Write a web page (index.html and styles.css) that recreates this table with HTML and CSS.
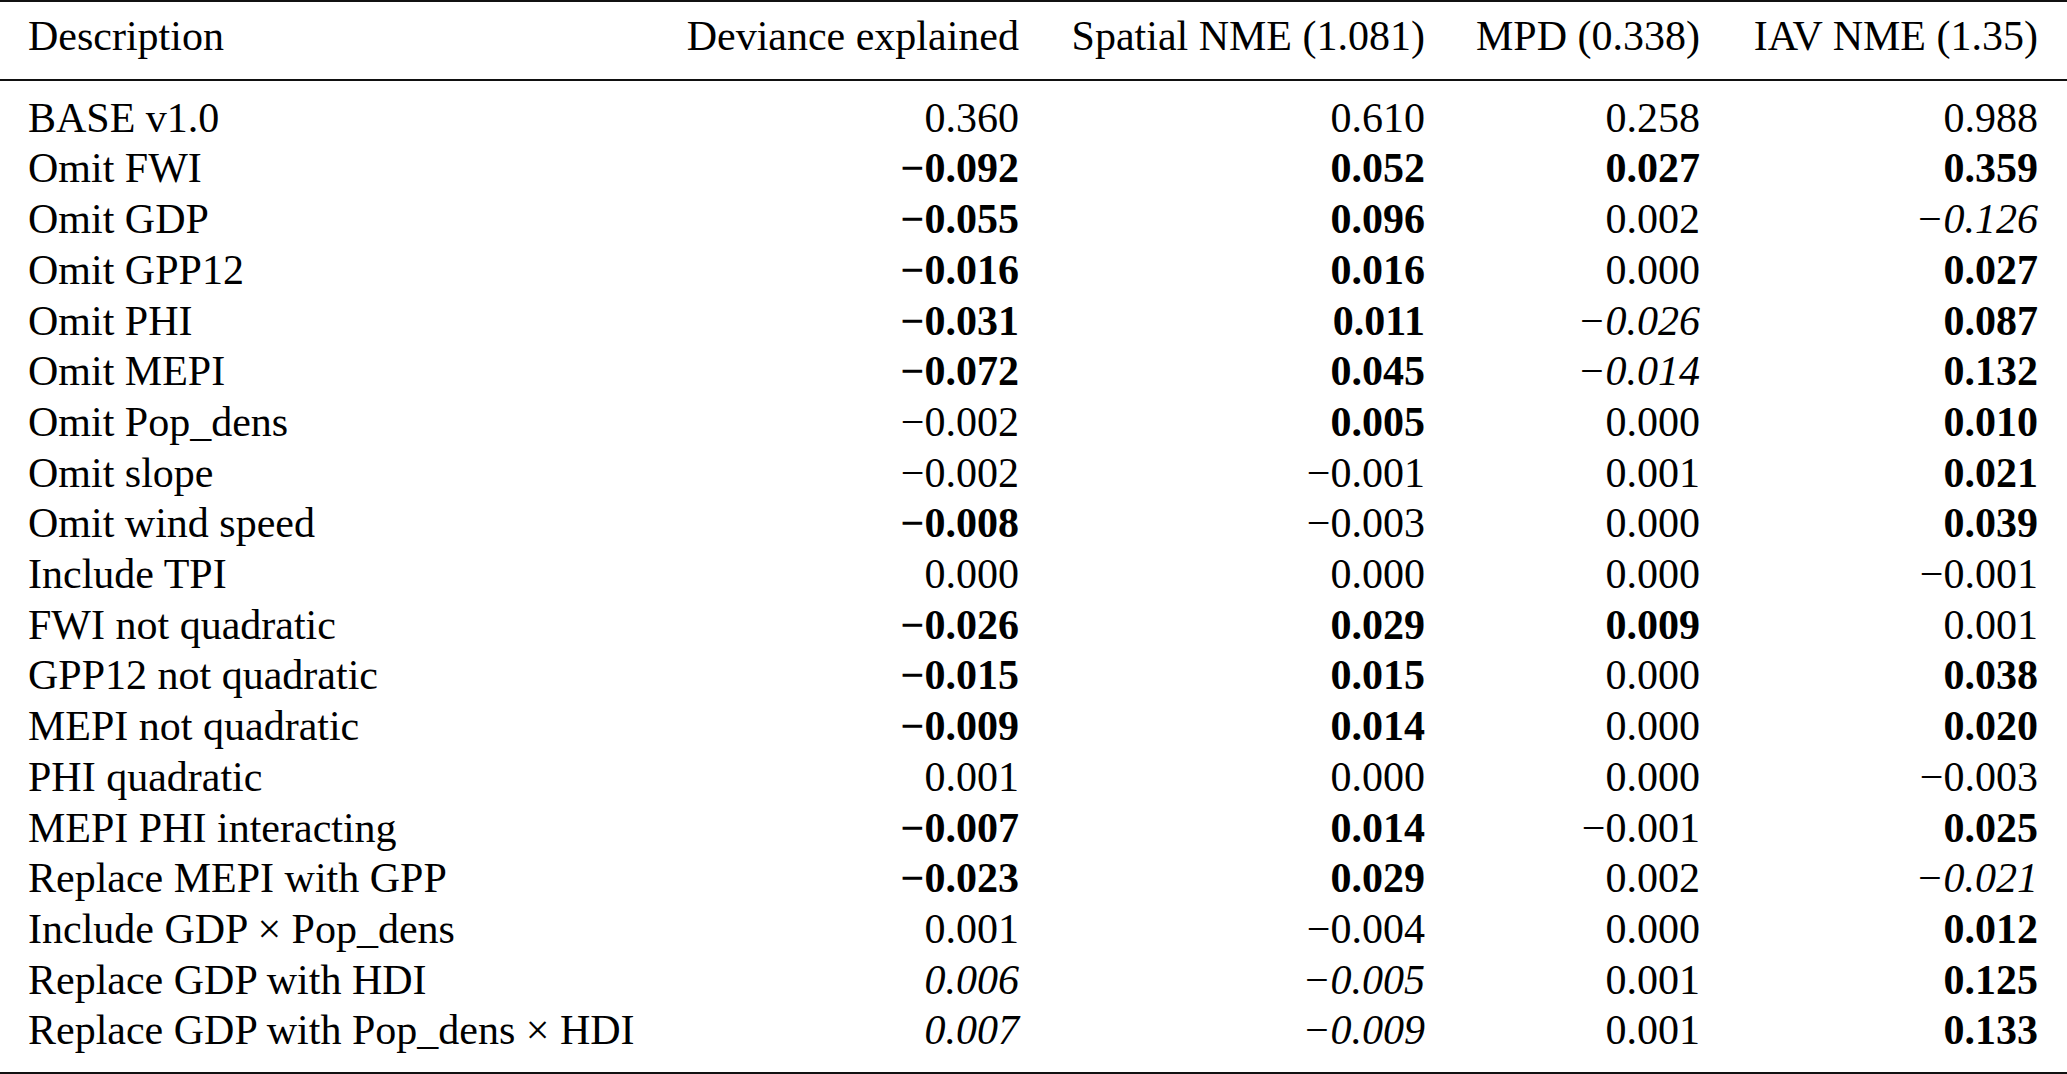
FILE: index.html
```html
<!DOCTYPE html>
<html lang="en">
<head>
<meta charset="utf-8">
<title>Table</title>
<link rel="stylesheet" href="styles.css">
</head>
<body>
<table class="results">
  <colgroup>
    <col class="c-desc">
    <col class="c-dev">
    <col class="c-spa">
    <col class="c-mpd">
    <col class="c-iav">
  </colgroup>
  <thead>
    <tr>
      <th class="desc">Description</th>
      <th>Deviance explained</th>
      <th>Spatial NME (1.081)</th>
      <th>MPD (0.338)</th>
      <th>IAV NME (1.35)</th>
    </tr>
  </thead>
  <tbody>
    <tr><td class="desc">BASE v1.0</td><td>0.360</td><td>0.610</td><td>0.258</td><td>0.988</td></tr>
    <tr><td class="desc">Omit FWI</td><td class="b">−0.092</td><td class="b">0.052</td><td class="b">0.027</td><td class="b">0.359</td></tr>
    <tr><td class="desc">Omit GDP</td><td class="b">−0.055</td><td class="b">0.096</td><td>0.002</td><td class="i">−0.126</td></tr>
    <tr><td class="desc">Omit GPP12</td><td class="b">−0.016</td><td class="b">0.016</td><td>0.000</td><td class="b">0.027</td></tr>
    <tr><td class="desc">Omit PHI</td><td class="b">−0.031</td><td class="b">0.011</td><td class="i">−0.026</td><td class="b">0.087</td></tr>
    <tr><td class="desc">Omit MEPI</td><td class="b">−0.072</td><td class="b">0.045</td><td class="i">−0.014</td><td class="b">0.132</td></tr>
    <tr><td class="desc">Omit Pop_dens</td><td>−0.002</td><td class="b">0.005</td><td>0.000</td><td class="b">0.010</td></tr>
    <tr><td class="desc">Omit slope</td><td>−0.002</td><td>−0.001</td><td>0.001</td><td class="b">0.021</td></tr>
    <tr><td class="desc">Omit wind speed</td><td class="b">−0.008</td><td>−0.003</td><td>0.000</td><td class="b">0.039</td></tr>
    <tr><td class="desc">Include TPI</td><td>0.000</td><td>0.000</td><td>0.000</td><td>−0.001</td></tr>
    <tr><td class="desc">FWI not quadratic</td><td class="b">−0.026</td><td class="b">0.029</td><td class="b">0.009</td><td>0.001</td></tr>
    <tr><td class="desc">GPP12 not quadratic</td><td class="b">−0.015</td><td class="b">0.015</td><td>0.000</td><td class="b">0.038</td></tr>
    <tr><td class="desc">MEPI not quadratic</td><td class="b">−0.009</td><td class="b">0.014</td><td>0.000</td><td class="b">0.020</td></tr>
    <tr><td class="desc">PHI quadratic</td><td>0.001</td><td>0.000</td><td>0.000</td><td>−0.003</td></tr>
    <tr><td class="desc">MEPI PHI interacting</td><td class="b">−0.007</td><td class="b">0.014</td><td>−0.001</td><td class="b">0.025</td></tr>
    <tr><td class="desc">Replace MEPI with GPP</td><td class="b">−0.023</td><td class="b">0.029</td><td>0.002</td><td class="i">−0.021</td></tr>
    <tr><td class="desc">Include GDP × Pop_dens</td><td>0.001</td><td>−0.004</td><td>0.000</td><td class="b">0.012</td></tr>
    <tr><td class="desc">Replace GDP with HDI</td><td class="i">0.006</td><td class="i">−0.005</td><td>0.001</td><td class="b">0.125</td></tr>
    <tr><td class="desc">Replace GDP with Pop_dens × HDI</td><td class="i">0.007</td><td class="i">−0.009</td><td>0.001</td><td class="b">0.133</td></tr>
  </tbody>
</table>
</body>
</html>
```
FILE: styles.css
```css
html, body {
  margin: 0;
  padding: 0;
  background: #ffffff;
}

body {
  font-family: "Liberation Serif", "Times New Roman", serif;
  font-size: 42px;
  color: #000000;
}

.results {
  width: 2067px;
  table-layout: fixed;
  border-collapse: collapse;
  border-top: 2px solid #111111;
  border-bottom: 3px solid #111111;
}

.c-desc { width: 667px; }
.c-dev  { width: 380px; }
.c-spa  { width: 406px; }
.c-mpd  { width: 275px; }
.c-iav  { width: 339px; }

.results th,
.results td {
  padding: 0 28px 0 12px;
  line-height: 50.7px;
  text-align: right;
  white-space: nowrap;
  font-weight: normal;
  font-style: normal;
}

.results th:last-child,
.results td:last-child {
  padding-right: 29px;
}

.results .desc {
  text-align: left;
  padding-left: 28px;
}

.results thead th {
  padding-top: 9px;
  padding-bottom: 17px;
  border-bottom: 2px solid #111111;
}

.results tbody tr:first-child td {
  padding-top: 12px;
}

.results tbody tr:last-child td {
  padding-bottom: 16px;
}

.results .b {
  font-weight: bold;
}

.results .i {
  font-style: italic;
}
```
